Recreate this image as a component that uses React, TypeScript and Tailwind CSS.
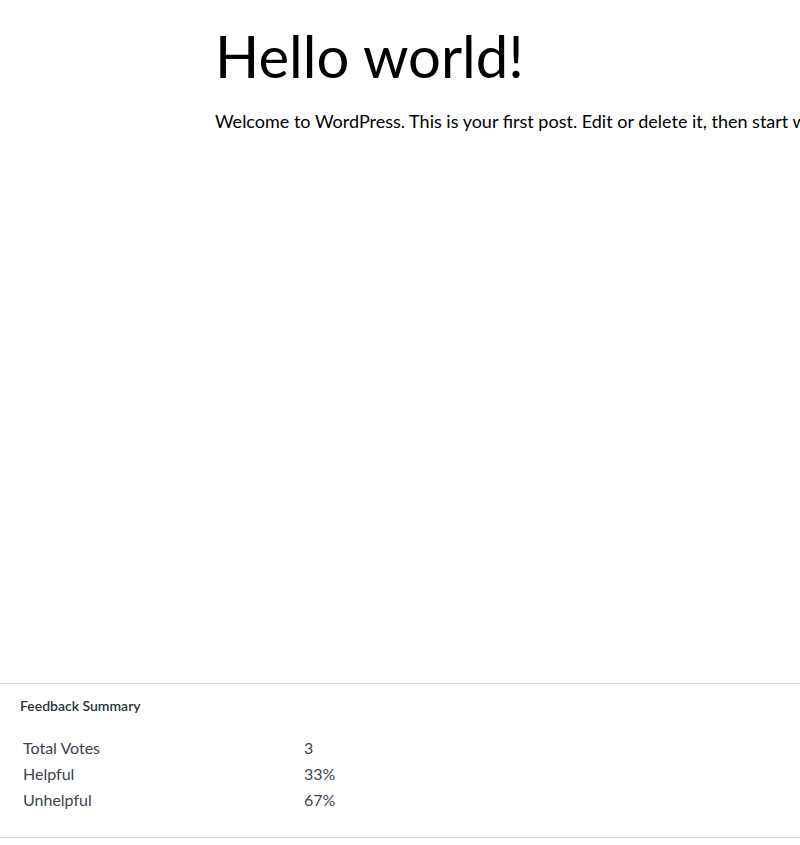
const rows = [
  { label: "Total Votes", value: "3" },
  { label: "Helpful", value: "33%" },
  { label: "Unhelpful", value: "67%" },
];

export default function App() {
  return (
    <div className="w-[800px] h-[845px] overflow-hidden bg-white font-['Lato',sans-serif]">
      {/* Post */}
      <div className="h-[683px] pl-[215px] pt-[18px] whitespace-nowrap">
        <h1 className="text-[58px] leading-[76px] text-black">Hello world!</h1>
        <p className="mt-[12px] text-[18px] leading-[30px] text-black">
          Welcome to WordPress. This is your first post. Edit or delete it, then start writing!
        </p>
      </div>

      {/* Feedback summary */}
      <div className="border-t border-b border-[#dcdcde] h-[155px]">
        <h2 className="pl-5 pt-[13px] text-[14px] leading-[18px] font-semibold text-[#2c3338]">
          Feedback Summary
        </h2>
        <table className="ml-[20px] mt-[20px] text-[16px] text-[#3c434a]">
          <tbody>
            {rows.map((r) => (
              <tr key={r.label} className="h-[26px]">
                <td className="w-[281px] px-[3px]">{r.label}</td>
                <td className="px-[3px]">{r.value}</td>
              </tr>
            ))}
          </tbody>
        </table>
      </div>
    </div>
  );
}
